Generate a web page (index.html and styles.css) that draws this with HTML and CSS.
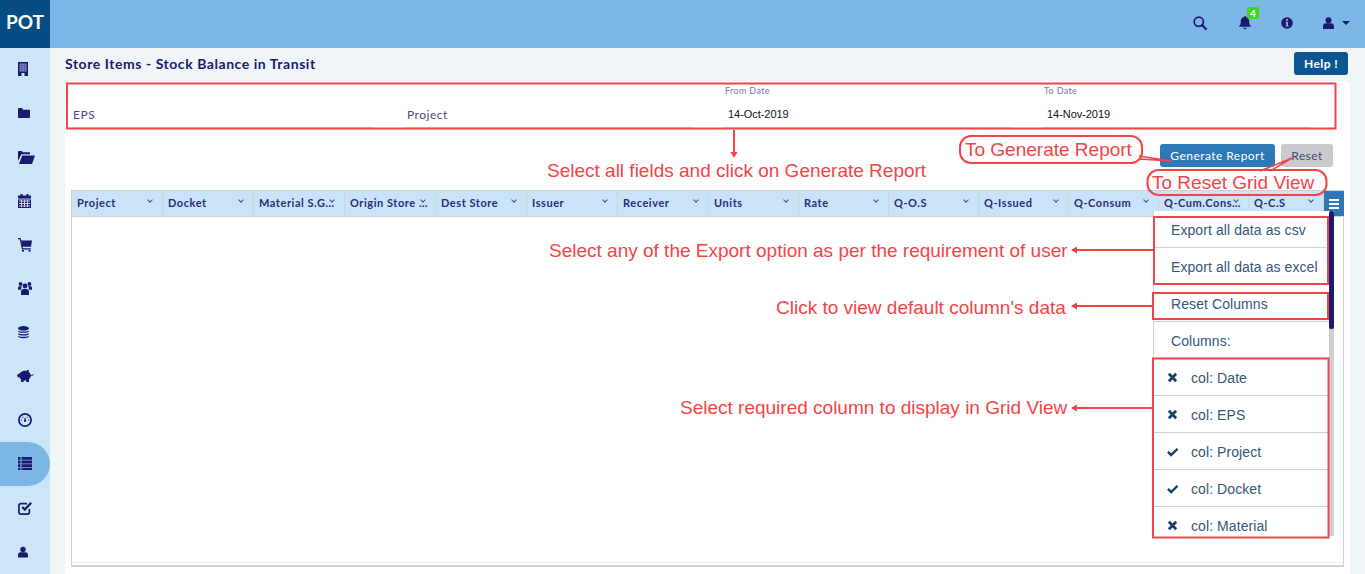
FILE: index.html
```html
<!DOCTYPE html>
<html lang="en">
<head>
  <meta charset="UTF-8">
  <meta name="viewport" content="width=device-width, initial-scale=1.0">
  <title>Store Items - Stock Balance in Transit</title>
  <link rel="stylesheet" href="styles.css">
</head>
<body>

<header class="topbar">
  <div class="logo">POT</div>
  <div class="top-icons">
    <svg class="top-search" viewBox="0 0 14 14"><circle cx="5.800" cy="5.800" r="4.600" fill="none" stroke="#1a1a6e" stroke-width="1.700"/><path d="M9 9l4 4" stroke="#1a1a6e" stroke-width="2.200" stroke-linecap="round"/></svg>
    <div class="bell-wrap">
      <svg class="top-bell" viewBox="0 0 14 14"><path fill="#1a1a6e" d="M7 0a1 1 0 0 1 1 1c2.200.4 3.200 2.200 3.200 4.300 0 3 .8 4.200 2 5.500H.8c1.200-1.300 2-2.500 2-5.500C2.800 3.200 3.800 1.400 6 1a1 1 0 0 1 1-1zM5.400 11.700h3.200a1.600 1.600 0 0 1-3.200 0z"/></svg>
      <span class="badge">4</span>
    </div>
    <svg class="top-info" viewBox="0 0 12 12"><circle cx="6" cy="6" r="5.800" fill="#1a1a6e"/><rect x="5" y="2.200" width="2" height="1.800" fill="#7cb7e8"/><path fill="#7cb7e8" d="M4.500 5h2.500v3.400h.7v1H4.500v-1h.7V6h-.7z"/></svg>
    <div class="user-wrap">
      <svg class="top-user" viewBox="0 0 11 12"><circle cx="5.500" cy="3.200" r="3" fill="#1a1a6e"/><path fill="#1a1a6e" d="M0 12V9.200C0 7.500 1.200 6.200 2.800 6.200h5.400c1.600 0 2.800 1.300 2.800 3V12z"/></svg>
      <span class="caret"></span>
    </div>
  </div>
</header>

<div class="layout">
  <nav class="sidebar">
    <a class="side-item"><svg width="10" height="14" viewBox="0 0 10 14"><path fill="#1a1a6e" d="M0 0h10v14H0z"/><path fill="#7d8ab8" d="M1.500 1.500h7v8h-7z"/><path stroke="#3d4690" stroke-width=".5" d="M1.500 3.500h7M1.500 5.500h7M1.500 7.500h7M3.500 1.500v8M6.500 1.500v8"/><path fill="#cbe5f9" d="M3.500 11h3v3h-3z"/></svg></a>
    <a class="side-item"><svg width="12" height="10" viewBox="0 0 12 10"><path fill="#1a1a6e" d="M0 1c0-.6.4-1 1-1h3l1.300 1.800H11c.6 0 1 .4 1 1V9c0 .6-.4 1-1 1H1c-.6 0-1-.4-1-1z"/></svg></a>
    <a class="side-item"><svg width="17" height="13" viewBox="0 0 17 13"><path fill="#1a1a6e" d="M0 1.200C0 .5.500 0 1.200 0h2.600l1 1.300h7.200v2H3.400L0 10z"/><path fill="#1a1a6e" d="M4.300 4.500H17L14 13H1z"/></svg></a>
    <a class="side-item"><svg width="13" height="14" viewBox="0 0 13 14"><path fill="#1a1a6e" d="M0 1.500h13V14H0z"/><path fill="#1a1a6e" d="M2.500 0h2v2h-2zM8.500 0h2v2h-2z"/><path fill="#cbe5f9" d="M0 4.600h13v.9H0z"/><path stroke="#c9cfe6" stroke-width="1" d="M1 7h11M1 9.500h11M1 12h11M3.500 6v7M6.500 6v7M9.500 6v7"/></svg></a>
    <a class="side-item"><svg width="14" height="14" viewBox="0 0 14 14"><path fill="#1a1a6e" d="M3 2.500h11l-1 6.200H4.200z"/><path fill="none" stroke="#1a1a6e" stroke-width="1.200" d="M0 .6h2.200l2.200 10.200h8.400"/><circle cx="5" cy="12.800" r="1.100" fill="#1a1a6e"/><circle cx="11.500" cy="12.800" r="1.100" fill="#1a1a6e"/></svg></a>
    <a class="side-item"><svg width="14" height="13" viewBox="0 0 14 13"><circle cx="2.600" cy="2" r="1.900" fill="#1a1a6e"/><circle cx="11.400" cy="2" r="1.900" fill="#1a1a6e"/><circle cx="7" cy="4" r="2.400" fill="#1a1a6e"/><path fill="#1a1a6e" d="M0 7.800V5.800c0-1 .6-1.600 1.500-1.600h2.200L3 7.800zM14 7.800V5.800c0-1-.6-1.600-1.500-1.600h-2.200l.7 3.600zM3 13V9.500C3 8 4 7 5.400 7h3.200C10 7 11 8 11 9.500V13z"/></svg></a>
    <a class="side-item"><svg width="11" height="13" viewBox="0 0 11 13"><ellipse cx="5.500" cy="2.300" rx="5.500" ry="2.300" fill="#1a1a6e"/><path fill="none" stroke="#1a1a6e" stroke-width="1.300" d="M.4 5c1 1.600 9.200 1.600 10.200 0M.4 7.700c1 1.600 9.200 1.600 10.200 0M.4 10.300c1 1.600 9.200 1.600 10.200 0"/></svg></a>
    <a class="side-item pig"><svg width="17" height="12" viewBox="0 0 17 12"><path fill="#1a1a6e" d="M3.500 2.500C5 1.200 6.500.8 8.500.8c1 0 1.500-.8 3.500-.8l-.3 2c1 .6 1.800 1.500 2.100 2.800.3 2-.7 3.500-1.800 4.300V12H9.500l-.3-1.500H6.800L6.500 12H4V9.300C3.200 8.700 2.800 8 2.500 7.200H.8L0 5l2-1.300z"/><path fill="none" stroke="#1a1a6e" d="M13.500 5.500c1.300.3 2.500-.3 3-1.300"/></svg></a>
    <a class="side-item"><svg width="14" height="14" viewBox="0 0 14 14"><circle cx="7" cy="7" r="6.100" fill="none" stroke="#1a1a6e" stroke-width="1.700"/><path fill="#1a1a6e" d="M6.100 7.300l.7-2.800h.5l.7 2.800a1.100 1.100 0 1 1-1.900 0zM2.800 6.500H4v1H2.800zM4.300 3.700h1v1h-1zM8.800 3.700h1v1h-1zM10 6.500h1.200v1H10z"/></svg></a>
    <a class="side-item active"><svg width="14" height="13" viewBox="0 0 14 13"><path fill="#1a1a6e" d="M0 0h2.500v2.800H0zM3.500 0H14v2.800H3.500zM0 3.600h2.500v2.800H0zM3.500 3.600H14v2.800H3.500zM0 7.200h2.500V10H0zM3.500 7.200H14V10H3.500zM0 10.800h2.500V13H0zM3.500 10.800H14V13H3.500z"/></svg></a>
    <a class="side-item"><svg width="14" height="14" viewBox="0 0 14 14"><path fill="none" stroke="#1a1a6e" stroke-width="1.700" d="M11.400 8v3c0 1.300-.8 2.100-2.100 2.100H3c-1.300 0-2.100-.8-2.100-2.100V4.700C.9 3.400 1.700 2.600 3 2.600h6"/><path fill="none" stroke="#1a1a6e" stroke-width="2.200" d="M4.200 6l2.600 2.600L13.200 1.800"/></svg></a>
    <a class="side-item"><svg width="10" height="12" viewBox="0 0 11 12"><circle cx="5.500" cy="3.200" r="3" fill="#1a1a6e"/><path fill="#1a1a6e" d="M0 12V9.200C0 7.500 1.200 6.200 2.800 6.200h5.400c1.600 0 2.800 1.300 2.800 3V12z"/></svg></a>
  </nav>

  <main class="content">
    <div class="title-row">
      <h1>Store Items - Stock Balance in Transit</h1>
      <button type="button" class="btn-help">Help !</button>
    </div>

    <section class="card">
      <div class="filters">
        <div class="field"><span class="field-label"></span><span class="field-value plain">EPS</span></div>
        <div class="field"><span class="field-label"></span><span class="field-value plain">Project</span></div>
        <div class="field"><span class="field-label">From Date</span><span class="field-value">14-Oct-2019</span></div>
        <div class="field"><span class="field-label">To Date</span><span class="field-value">14-Nov-2019</span></div>
      </div>

      <div class="actions">
        <button type="button" class="btn-generate">Generate Report</button>
        <button type="button" class="btn-reset">Reset</button>
      </div>

      <div class="grid">
        <div class="grid-head">
          <div class="head-cell"><span>Project</span><i class="chev"></i></div>
          <div class="head-cell"><span>Docket</span><i class="chev"></i></div>
          <div class="head-cell"><span>Material S.G Code</span><i class="chev"></i></div>
          <div class="head-cell"><span>Origin Store Name</span><i class="chev"></i></div>
          <div class="head-cell"><span>Dest Store</span><i class="chev"></i></div>
          <div class="head-cell"><span>Issuer</span><i class="chev"></i></div>
          <div class="head-cell"><span>Receiver</span><i class="chev"></i></div>
          <div class="head-cell"><span>Units</span><i class="chev"></i></div>
          <div class="head-cell"><span>Rate</span><i class="chev"></i></div>
          <div class="head-cell"><span>Q-O.S</span><i class="chev"></i></div>
          <div class="head-cell"><span>Q-Issued</span><i class="chev"></i></div>
          <div class="head-cell"><span>Q-Consum</span><i class="chev"></i></div>
          <div class="head-cell"><span>Q-Cum.Consumed</span><i class="chev"></i></div>
          <div class="head-cell"><span>Q-C.S</span><i class="chev"></i></div>
          <div class="menu-btn"><b></b><b></b><b></b></div>
        </div>
        <div class="grid-body"></div>
      </div>
    </section>
  </main>
</div>

<!-- grid menu, opens over the grid -->
<div class="grid-menu">
  <div class="menu-list">
    <div class="menu-row">Export all data as csv</div>
    <div class="menu-row">Export all data as excel</div>
    <div class="menu-row">Reset Columns</div>
    <div class="menu-row">Columns:</div>
    <div class="menu-row col-row"><svg viewBox="0 0 12 12"><path stroke="#173f66" stroke-width="3" d="M2 2l8 8M10 2l-8 8"/></svg>col: Date</div>
    <div class="menu-row col-row"><svg viewBox="0 0 12 12"><path stroke="#173f66" stroke-width="3" d="M2 2l8 8M10 2l-8 8"/></svg>col: EPS</div>
    <div class="menu-row col-row"><svg viewBox="0 0 12 12"><path fill="none" stroke="#173f66" stroke-width="2.600" d="M1 6.500l3.500 3.300L11.500 3"/></svg>col: Project</div>
    <div class="menu-row col-row"><svg viewBox="0 0 12 12"><path fill="none" stroke="#173f66" stroke-width="2.600" d="M1 6.500l3.500 3.300L11.500 3"/></svg>col: Docket</div>
    <div class="menu-row col-row"><svg viewBox="0 0 12 12"><path stroke="#173f66" stroke-width="3" d="M2 2l8 8M10 2l-8 8"/></svg>col: Material</div>
  </div>
  <div class="menu-scroll"><div class="menu-thumb"></div></div>
</div>

<!-- help annotations drawn on top of the screenshot -->
<svg class="marks" viewBox="0 0 1365 574">
  <g fill="none" stroke="#f44346" stroke-width="2">
    <rect x="67" y="83.500" width="1268.500" height="45"/>
    <rect x="1154" y="217" width="174" height="67"/>
    <rect x="1153" y="293" width="175" height="26"/>
    <rect x="1153" y="358.500" width="175.500" height="179"/>
    <rect x="960" y="136" width="182" height="27" rx="11"/>
    <rect x="1147.500" y="170" width="179" height="25" rx="11"/>
    <path d="M734 130v24"/>
    <path d="M1072 250h82M1072 306h81M1072 408h81"/>
    <path d="M1139 156l32 5M1139 159l32 2" stroke-width="1.500"/>
    <path d="M1260 171l32-13M1270 171l22-13" stroke-width="1.500"/>
  </g>
  <path fill="#f44346" d="M734 158l-3.500-6h7zM1071 250l6-3.500v7zM1071 306l6-3.500v7zM1071 408l6-3.500v7z"/>
</svg>
<div class="note note-fields">Select all fields and click on Generate Report</div>
<div class="note note-export">Select any of the Export option as per the requirement of user</div>
<div class="note note-default">Click to view default column's data</div>
<div class="note note-columns">Select required column to display in Grid View</div>
<div class="note note-generate">To Generate Report</div>
<div class="note note-reset">To Reset Grid View</div>

</body>
</html>
```

FILE: styles.css
```css
* {
  box-sizing: border-box;
}

html, body {
  margin: 0;
  height: 574px;
  overflow: hidden;
}

body {
  position: relative;
  font-family: Lato, "Liberation Sans", sans-serif;
  background-color: #f0f5f8;
  color: #1a1a6e;
}

/* top bar */
.topbar {
  display: flex;
  justify-content: space-between;
  height: 48px;
  background-color: #7cb7e8;
}

.logo {
  width: 50px;
  background-color: #054c84;
  color: white;
  font-size: 19px;
  font-weight: bold;
  line-height: 43px;
  text-align: center;
}

.top-icons {
  display: flex;
  align-items: center;
  padding: 0 15px 3px 0;
}

.top-search {
  width: 14px;
  height: 14px;
  margin-right: 31px;
}

.bell-wrap {
  position: relative;
  display: flex;
  margin-right: 29px;
}

.top-bell {
  width: 14px;
  height: 14px;
}

.badge {
  position: absolute;
  left: 9px;
  top: -9px;
  width: 12px;
  height: 12px;
  border-radius: 2px;
  background-color: #3fd61f;
  color: white;
  font-size: 10px;
  font-weight: bold;
  line-height: 12px;
  text-align: center;
}

.top-info {
  width: 12px;
  height: 12px;
  margin-right: 30px;
}

.user-wrap {
  display: flex;
  align-items: center;
}

.top-user {
  width: 11px;
  height: 12px;
  margin-right: 8px;
}

.caret {
  border-left: 4px solid transparent;
  border-right: 4px solid transparent;
  border-top: 4px solid #1a1a6e;
}

/* sidebar */
.layout {
  display: flex;
  height: 526px;
}

.sidebar {
  flex: none;
  display: flex;
  flex-direction: column;
  width: 50px;
  background-color: #cbe5f9;
}

.side-item {
  display: flex;
  align-items: center;
  height: 44px;
  padding: 0 0 1px 18px;
}

.side-item.pig {
  padding-left: 17px;
}

.side-item.active {
  background-color: #7cb7e8;
  border-radius: 0 22px 22px 0;
}

/* main part */
.content {
  flex: 1;
  padding: 0 15px;
  min-width: 0;
}

.title-row {
  display: flex;
  justify-content: space-between;
  height: 33px;
  padding: 4px 2px 0 0;
}

h1 {
  margin: 0;
  font-size: 14px;
  font-weight: bold;
  line-height: 24px;
  letter-spacing: 0.55px;
}

button {
  border: none;
  border-radius: 3px;
  font-family: Lato, "Liberation Sans", sans-serif;
  cursor: pointer;
}

.btn-help {
  width: 54px;
  height: 23px;
  padding: 0;
  background-color: #0d5590;
  color: white;
  font-size: 12px;
  font-weight: bold;
  letter-spacing: 0.4px;
}

.card {
  height: 500px;
  padding: 2px 6px 0;
  background-color: white;
  border-radius: 5px 5px 0 0;
}

.filters {
  display: grid;
  grid-template-columns: 334px 319px 319px 1fr;
  height: 45px;
  padding-left: 1px;
}

.field {
  display: flex;
  flex-direction: column;
  margin-right: 34px;
  border-bottom: 1px solid #dedede;
}

.field-label {
  height: 22px;
  padding-top: 2px;
  font-size: 9px;
  letter-spacing: 0.35px;
  color: #7a74ac;
}

.field-value {
  padding: 3px 0 0 3px;
  font-family: "Liberation Sans", sans-serif;
  font-size: 11px;
  letter-spacing: -0.05px;
  color: #111;
}

.field-value.plain {
  padding: 2px 0 0 1px;
  font-family: Lato, sans-serif;
  font-size: 12px;
  letter-spacing: 0.5px;
  color: #4a4790;
}

.actions {
  display: flex;
  justify-content: flex-end;
  gap: 6px;
  height: 62px;
  padding: 16px 11px 0 0;
}

.btn-generate {
  width: 115px;
  height: 23px;
  padding: 0;
  background-color: #2e78b5;
  color: white;
  font-size: 12px;
  letter-spacing: 0.45px;
}

.btn-reset {
  width: 52px;
  height: 23px;
  padding: 0;
  background-color: #c8cacd;
  color: #3c4a6b;
  font-size: 12px;
  letter-spacing: 0.4px;
}

/* grid */
.grid {
  height: 377px;
  border: 1px solid #d0d0d0;
  border-bottom-width: 2px;
}

.grid-head {
  display: grid;
  grid-template-columns: repeat(7, 91px) repeat(6, 90px) 75px 20px;
  height: 26px;
  background-color: #c9e3f8;
  border-bottom: 1px solid #d0d0d0;
}

.head-cell {
  position: relative;
  padding: 0 7px 0 5px;
  border-right: 1px solid #d4d4d4;
  font-size: 11px;
  font-weight: bold;
  line-height: 24px;
  letter-spacing: 0.55px;
  color: #2c2c78;
}

.head-cell span {
  display: block;
  overflow: hidden;
  white-space: nowrap;
  text-overflow: ellipsis;
}

.chev {
  position: absolute;
  right: 10px;
  top: 7px;
  width: 4px;
  height: 4px;
  border-right: 1px solid #4a4a90;
  border-bottom: 1px solid #4a4a90;
  transform: rotate(45deg);
}

.menu-btn {
  display: flex;
  flex-direction: column;
  justify-content: center;
  align-items: center;
  gap: 2px;
  background-color: #2e78b5;
}

.menu-btn b {
  width: 10px;
  height: 2px;
  background-color: white;
}

.grid-body {
  height: 346px;
  border-bottom: 1px solid #eeeeee;
}

/* grid menu */
.grid-menu {
  position: absolute;
  left: 1153px;
  top: 211px;
  display: flex;
  width: 181px;
  height: 325px;
  background-color: white;
}

.menu-list {
  width: 176px;
  overflow: hidden;
  border-left: 1px solid #d0d0d0;
}

.menu-row {
  height: 37px;
  padding: 1px 0 0 17px;
  border-bottom: 1px solid #d0d0d0;
  font-family: "Liberation Sans", sans-serif;
  font-size: 14px;
  line-height: 36px;
  letter-spacing: 0.08px;
  color: #34577a;
}

.col-row {
  display: flex;
  align-items: center;
  padding-left: 13px;
}

.col-row svg {
  flex: none;
  width: 11px;
  height: 11px;
  margin-right: 13px;
}

.menu-scroll {
  width: 5px;
  background-color: #cfcfcf;
}

.menu-thumb {
  height: 118px;
  background-color: #1a1a6e;
  border-radius: 2px;
}

/* annotations */
.marks {
  position: absolute;
  left: 0;
  top: 0;
  width: 1365px;
  height: 574px;
  pointer-events: none;
}

.note {
  position: absolute;
  font-family: "Liberation Sans", sans-serif;
  font-size: 19px;
  line-height: 22px;
  white-space: nowrap;
  color: #f44346;
}

.note-fields {
  left: 547px;
  top: 160px;
}

.note-export {
  left: 549px;
  top: 240px;
}

.note-default {
  left: 776px;
  top: 297px;
}

.note-columns {
  left: 680px;
  top: 397px;
}

.note-generate {
  left: 965px;
  top: 139px;
}

.note-reset {
  left: 1152px;
  top: 172px;
}
```
